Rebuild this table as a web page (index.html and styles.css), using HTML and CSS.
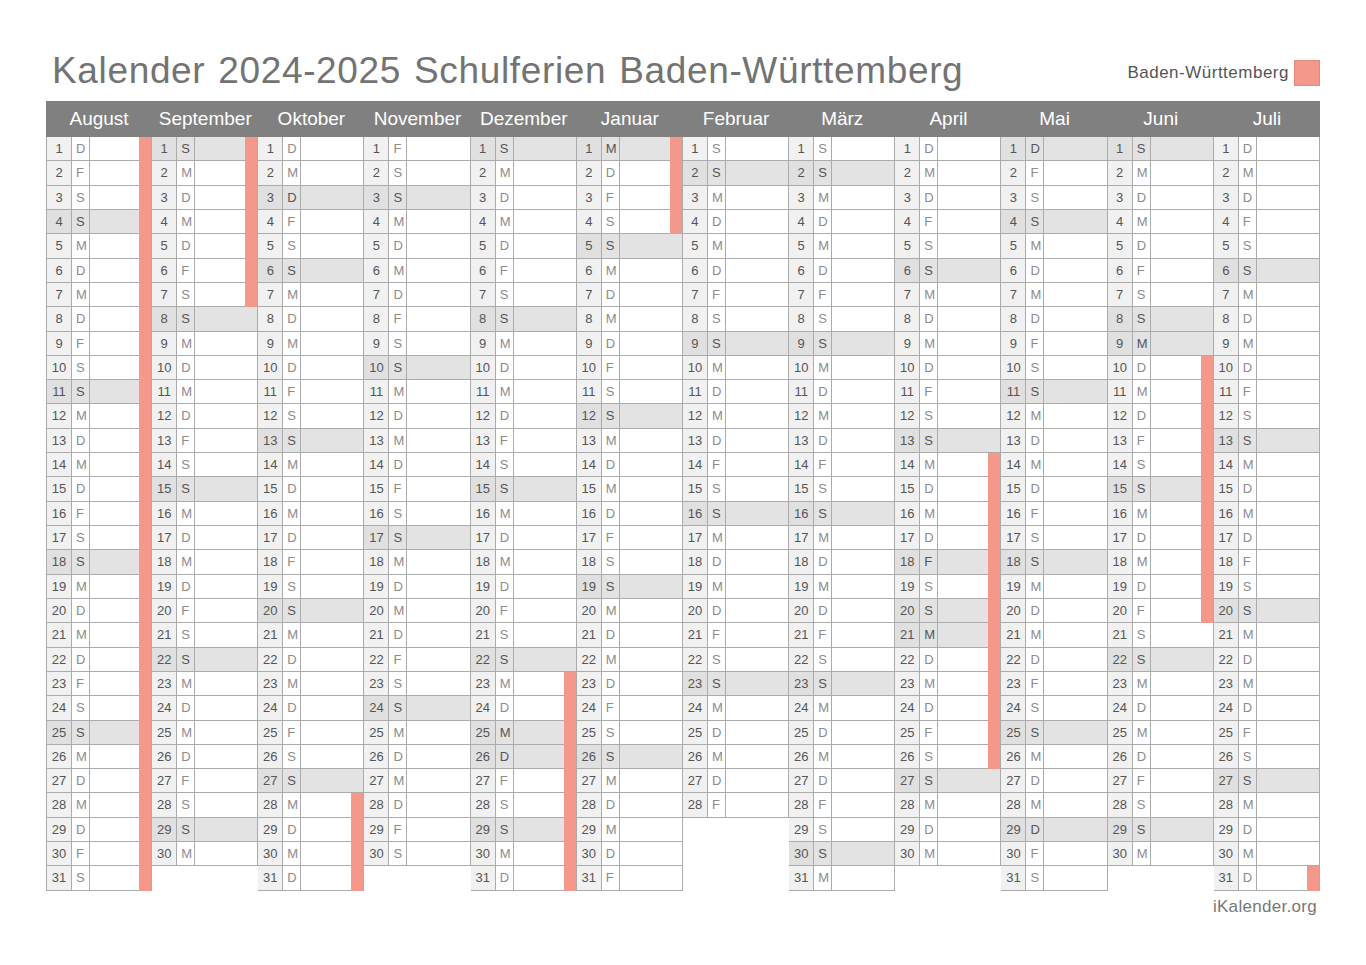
FILE: index.html
```html
<!DOCTYPE html>
<html lang="de">
<head>
<meta charset="utf-8">
<title>Kalender 2024-2025 Schulferien Baden-Württemberg</title>
<link rel="stylesheet" href="styles.css">
</head>
<body>
<div class="page">
  <header class="top">
    <h1>Kalender 2024-2025 Schulferien Baden-Württemberg</h1>
    <div class="legend"><span>Baden-Württemberg</span><span class="sw"></span></div>
  </header>
  <div class="cal-head">
    <div>August</div><div>September</div><div>Oktober</div><div>November</div><div>Dezember</div><div>Januar</div><div>Februar</div><div>März</div><div>April</div><div>Mai</div><div>Juni</div><div>Juli</div>
  </div>
  <div class="cal-body">
    <ul class="m">
      <li class="h"><b>1</b><i>D</i></li><li class="h"><b>2</b><i>F</i></li><li class="h"><b>3</b><i>S</i></li><li class="s h"><b>4</b><i>S</i></li><li class="h"><b>5</b><i>M</i></li><li class="h"><b>6</b><i>D</i></li><li class="h"><b>7</b><i>M</i></li><li class="h"><b>8</b><i>D</i></li><li class="h"><b>9</b><i>F</i></li><li class="h"><b>10</b><i>S</i></li><li class="s h"><b>11</b><i>S</i></li><li class="h"><b>12</b><i>M</i></li><li class="h"><b>13</b><i>D</i></li><li class="h"><b>14</b><i>M</i></li><li class="h"><b>15</b><i>D</i></li><li class="h"><b>16</b><i>F</i></li><li class="h"><b>17</b><i>S</i></li><li class="s h"><b>18</b><i>S</i></li><li class="h"><b>19</b><i>M</i></li><li class="h"><b>20</b><i>D</i></li><li class="h"><b>21</b><i>M</i></li><li class="h"><b>22</b><i>D</i></li><li class="h"><b>23</b><i>F</i></li><li class="h"><b>24</b><i>S</i></li><li class="s h"><b>25</b><i>S</i></li><li class="h"><b>26</b><i>M</i></li><li class="h"><b>27</b><i>D</i></li><li class="h"><b>28</b><i>M</i></li><li class="h"><b>29</b><i>D</i></li><li class="h"><b>30</b><i>F</i></li><li class="h"><b>31</b><i>S</i></li>
    </ul>
    <ul class="m">
      <li class="s h"><b>1</b><i>S</i></li><li class="h"><b>2</b><i>M</i></li><li class="h"><b>3</b><i>D</i></li><li class="h"><b>4</b><i>M</i></li><li class="h"><b>5</b><i>D</i></li><li class="h"><b>6</b><i>F</i></li><li class="h"><b>7</b><i>S</i></li><li class="s"><b>8</b><i>S</i></li><li><b>9</b><i>M</i></li><li><b>10</b><i>D</i></li><li><b>11</b><i>M</i></li><li><b>12</b><i>D</i></li><li><b>13</b><i>F</i></li><li><b>14</b><i>S</i></li><li class="s"><b>15</b><i>S</i></li><li><b>16</b><i>M</i></li><li><b>17</b><i>D</i></li><li><b>18</b><i>M</i></li><li><b>19</b><i>D</i></li><li><b>20</b><i>F</i></li><li><b>21</b><i>S</i></li><li class="s"><b>22</b><i>S</i></li><li><b>23</b><i>M</i></li><li><b>24</b><i>D</i></li><li><b>25</b><i>M</i></li><li><b>26</b><i>D</i></li><li><b>27</b><i>F</i></li><li><b>28</b><i>S</i></li><li class="s"><b>29</b><i>S</i></li><li><b>30</b><i>M</i></li>
    </ul>
    <ul class="m">
      <li><b>1</b><i>D</i></li><li><b>2</b><i>M</i></li><li class="s"><b>3</b><i>D</i></li><li><b>4</b><i>F</i></li><li><b>5</b><i>S</i></li><li class="s"><b>6</b><i>S</i></li><li><b>7</b><i>M</i></li><li><b>8</b><i>D</i></li><li><b>9</b><i>M</i></li><li><b>10</b><i>D</i></li><li><b>11</b><i>F</i></li><li><b>12</b><i>S</i></li><li class="s"><b>13</b><i>S</i></li><li><b>14</b><i>M</i></li><li><b>15</b><i>D</i></li><li><b>16</b><i>M</i></li><li><b>17</b><i>D</i></li><li><b>18</b><i>F</i></li><li><b>19</b><i>S</i></li><li class="s"><b>20</b><i>S</i></li><li><b>21</b><i>M</i></li><li><b>22</b><i>D</i></li><li><b>23</b><i>M</i></li><li><b>24</b><i>D</i></li><li><b>25</b><i>F</i></li><li><b>26</b><i>S</i></li><li class="s"><b>27</b><i>S</i></li><li class="h"><b>28</b><i>M</i></li><li class="h"><b>29</b><i>D</i></li><li class="h"><b>30</b><i>M</i></li><li class="h"><b>31</b><i>D</i></li>
    </ul>
    <ul class="m">
      <li><b>1</b><i>F</i></li><li><b>2</b><i>S</i></li><li class="s"><b>3</b><i>S</i></li><li><b>4</b><i>M</i></li><li><b>5</b><i>D</i></li><li><b>6</b><i>M</i></li><li><b>7</b><i>D</i></li><li><b>8</b><i>F</i></li><li><b>9</b><i>S</i></li><li class="s"><b>10</b><i>S</i></li><li><b>11</b><i>M</i></li><li><b>12</b><i>D</i></li><li><b>13</b><i>M</i></li><li><b>14</b><i>D</i></li><li><b>15</b><i>F</i></li><li><b>16</b><i>S</i></li><li class="s"><b>17</b><i>S</i></li><li><b>18</b><i>M</i></li><li><b>19</b><i>D</i></li><li><b>20</b><i>M</i></li><li><b>21</b><i>D</i></li><li><b>22</b><i>F</i></li><li><b>23</b><i>S</i></li><li class="s"><b>24</b><i>S</i></li><li><b>25</b><i>M</i></li><li><b>26</b><i>D</i></li><li><b>27</b><i>M</i></li><li><b>28</b><i>D</i></li><li><b>29</b><i>F</i></li><li><b>30</b><i>S</i></li>
    </ul>
    <ul class="m">
      <li class="s"><b>1</b><i>S</i></li><li><b>2</b><i>M</i></li><li><b>3</b><i>D</i></li><li><b>4</b><i>M</i></li><li><b>5</b><i>D</i></li><li><b>6</b><i>F</i></li><li><b>7</b><i>S</i></li><li class="s"><b>8</b><i>S</i></li><li><b>9</b><i>M</i></li><li><b>10</b><i>D</i></li><li><b>11</b><i>M</i></li><li><b>12</b><i>D</i></li><li><b>13</b><i>F</i></li><li><b>14</b><i>S</i></li><li class="s"><b>15</b><i>S</i></li><li><b>16</b><i>M</i></li><li><b>17</b><i>D</i></li><li><b>18</b><i>M</i></li><li><b>19</b><i>D</i></li><li><b>20</b><i>F</i></li><li><b>21</b><i>S</i></li><li class="s"><b>22</b><i>S</i></li><li class="h"><b>23</b><i>M</i></li><li class="h"><b>24</b><i>D</i></li><li class="s h"><b>25</b><i>M</i></li><li class="s h"><b>26</b><i>D</i></li><li class="h"><b>27</b><i>F</i></li><li class="h"><b>28</b><i>S</i></li><li class="s h"><b>29</b><i>S</i></li><li class="h"><b>30</b><i>M</i></li><li class="h"><b>31</b><i>D</i></li>
    </ul>
    <ul class="m">
      <li class="s h"><b>1</b><i>M</i></li><li class="h"><b>2</b><i>D</i></li><li class="h"><b>3</b><i>F</i></li><li class="h"><b>4</b><i>S</i></li><li class="s"><b>5</b><i>S</i></li><li><b>6</b><i>M</i></li><li><b>7</b><i>D</i></li><li><b>8</b><i>M</i></li><li><b>9</b><i>D</i></li><li><b>10</b><i>F</i></li><li><b>11</b><i>S</i></li><li class="s"><b>12</b><i>S</i></li><li><b>13</b><i>M</i></li><li><b>14</b><i>D</i></li><li><b>15</b><i>M</i></li><li><b>16</b><i>D</i></li><li><b>17</b><i>F</i></li><li><b>18</b><i>S</i></li><li class="s"><b>19</b><i>S</i></li><li><b>20</b><i>M</i></li><li><b>21</b><i>D</i></li><li><b>22</b><i>M</i></li><li><b>23</b><i>D</i></li><li><b>24</b><i>F</i></li><li><b>25</b><i>S</i></li><li class="s"><b>26</b><i>S</i></li><li><b>27</b><i>M</i></li><li><b>28</b><i>D</i></li><li><b>29</b><i>M</i></li><li><b>30</b><i>D</i></li><li><b>31</b><i>F</i></li>
    </ul>
    <ul class="m">
      <li><b>1</b><i>S</i></li><li class="s"><b>2</b><i>S</i></li><li><b>3</b><i>M</i></li><li><b>4</b><i>D</i></li><li><b>5</b><i>M</i></li><li><b>6</b><i>D</i></li><li><b>7</b><i>F</i></li><li><b>8</b><i>S</i></li><li class="s"><b>9</b><i>S</i></li><li><b>10</b><i>M</i></li><li><b>11</b><i>D</i></li><li><b>12</b><i>M</i></li><li><b>13</b><i>D</i></li><li><b>14</b><i>F</i></li><li><b>15</b><i>S</i></li><li class="s"><b>16</b><i>S</i></li><li><b>17</b><i>M</i></li><li><b>18</b><i>D</i></li><li><b>19</b><i>M</i></li><li><b>20</b><i>D</i></li><li><b>21</b><i>F</i></li><li><b>22</b><i>S</i></li><li class="s"><b>23</b><i>S</i></li><li><b>24</b><i>M</i></li><li><b>25</b><i>D</i></li><li><b>26</b><i>M</i></li><li><b>27</b><i>D</i></li><li><b>28</b><i>F</i></li>
    </ul>
    <ul class="m">
      <li><b>1</b><i>S</i></li><li class="s"><b>2</b><i>S</i></li><li><b>3</b><i>M</i></li><li><b>4</b><i>D</i></li><li><b>5</b><i>M</i></li><li><b>6</b><i>D</i></li><li><b>7</b><i>F</i></li><li><b>8</b><i>S</i></li><li class="s"><b>9</b><i>S</i></li><li><b>10</b><i>M</i></li><li><b>11</b><i>D</i></li><li><b>12</b><i>M</i></li><li><b>13</b><i>D</i></li><li><b>14</b><i>F</i></li><li><b>15</b><i>S</i></li><li class="s"><b>16</b><i>S</i></li><li><b>17</b><i>M</i></li><li><b>18</b><i>D</i></li><li><b>19</b><i>M</i></li><li><b>20</b><i>D</i></li><li><b>21</b><i>F</i></li><li><b>22</b><i>S</i></li><li class="s"><b>23</b><i>S</i></li><li><b>24</b><i>M</i></li><li><b>25</b><i>D</i></li><li><b>26</b><i>M</i></li><li><b>27</b><i>D</i></li><li><b>28</b><i>F</i></li><li><b>29</b><i>S</i></li><li class="s"><b>30</b><i>S</i></li><li><b>31</b><i>M</i></li>
    </ul>
    <ul class="m">
      <li><b>1</b><i>D</i></li><li><b>2</b><i>M</i></li><li><b>3</b><i>D</i></li><li><b>4</b><i>F</i></li><li><b>5</b><i>S</i></li><li class="s"><b>6</b><i>S</i></li><li><b>7</b><i>M</i></li><li><b>8</b><i>D</i></li><li><b>9</b><i>M</i></li><li><b>10</b><i>D</i></li><li><b>11</b><i>F</i></li><li><b>12</b><i>S</i></li><li class="s"><b>13</b><i>S</i></li><li class="h"><b>14</b><i>M</i></li><li class="h"><b>15</b><i>D</i></li><li class="h"><b>16</b><i>M</i></li><li class="h"><b>17</b><i>D</i></li><li class="s h"><b>18</b><i>F</i></li><li class="h"><b>19</b><i>S</i></li><li class="s h"><b>20</b><i>S</i></li><li class="s h"><b>21</b><i>M</i></li><li class="h"><b>22</b><i>D</i></li><li class="h"><b>23</b><i>M</i></li><li class="h"><b>24</b><i>D</i></li><li class="h"><b>25</b><i>F</i></li><li class="h"><b>26</b><i>S</i></li><li class="s"><b>27</b><i>S</i></li><li><b>28</b><i>M</i></li><li><b>29</b><i>D</i></li><li><b>30</b><i>M</i></li>
    </ul>
    <ul class="m">
      <li class="s"><b>1</b><i>D</i></li><li><b>2</b><i>F</i></li><li><b>3</b><i>S</i></li><li class="s"><b>4</b><i>S</i></li><li><b>5</b><i>M</i></li><li><b>6</b><i>D</i></li><li><b>7</b><i>M</i></li><li><b>8</b><i>D</i></li><li><b>9</b><i>F</i></li><li><b>10</b><i>S</i></li><li class="s"><b>11</b><i>S</i></li><li><b>12</b><i>M</i></li><li><b>13</b><i>D</i></li><li><b>14</b><i>M</i></li><li><b>15</b><i>D</i></li><li><b>16</b><i>F</i></li><li><b>17</b><i>S</i></li><li class="s"><b>18</b><i>S</i></li><li><b>19</b><i>M</i></li><li><b>20</b><i>D</i></li><li><b>21</b><i>M</i></li><li><b>22</b><i>D</i></li><li><b>23</b><i>F</i></li><li><b>24</b><i>S</i></li><li class="s"><b>25</b><i>S</i></li><li><b>26</b><i>M</i></li><li><b>27</b><i>D</i></li><li><b>28</b><i>M</i></li><li class="s"><b>29</b><i>D</i></li><li><b>30</b><i>F</i></li><li><b>31</b><i>S</i></li>
    </ul>
    <ul class="m">
      <li class="s"><b>1</b><i>S</i></li><li><b>2</b><i>M</i></li><li><b>3</b><i>D</i></li><li><b>4</b><i>M</i></li><li><b>5</b><i>D</i></li><li><b>6</b><i>F</i></li><li><b>7</b><i>S</i></li><li class="s"><b>8</b><i>S</i></li><li class="s"><b>9</b><i>M</i></li><li class="h"><b>10</b><i>D</i></li><li class="h"><b>11</b><i>M</i></li><li class="h"><b>12</b><i>D</i></li><li class="h"><b>13</b><i>F</i></li><li class="h"><b>14</b><i>S</i></li><li class="s h"><b>15</b><i>S</i></li><li class="h"><b>16</b><i>M</i></li><li class="h"><b>17</b><i>D</i></li><li class="h"><b>18</b><i>M</i></li><li class="h"><b>19</b><i>D</i></li><li class="h"><b>20</b><i>F</i></li><li><b>21</b><i>S</i></li><li class="s"><b>22</b><i>S</i></li><li><b>23</b><i>M</i></li><li><b>24</b><i>D</i></li><li><b>25</b><i>M</i></li><li><b>26</b><i>D</i></li><li><b>27</b><i>F</i></li><li><b>28</b><i>S</i></li><li class="s"><b>29</b><i>S</i></li><li><b>30</b><i>M</i></li>
    </ul>
    <ul class="m">
      <li><b>1</b><i>D</i></li><li><b>2</b><i>M</i></li><li><b>3</b><i>D</i></li><li><b>4</b><i>F</i></li><li><b>5</b><i>S</i></li><li class="s"><b>6</b><i>S</i></li><li><b>7</b><i>M</i></li><li><b>8</b><i>D</i></li><li><b>9</b><i>M</i></li><li><b>10</b><i>D</i></li><li><b>11</b><i>F</i></li><li><b>12</b><i>S</i></li><li class="s"><b>13</b><i>S</i></li><li><b>14</b><i>M</i></li><li><b>15</b><i>D</i></li><li><b>16</b><i>M</i></li><li><b>17</b><i>D</i></li><li><b>18</b><i>F</i></li><li><b>19</b><i>S</i></li><li class="s"><b>20</b><i>S</i></li><li><b>21</b><i>M</i></li><li><b>22</b><i>D</i></li><li><b>23</b><i>M</i></li><li><b>24</b><i>D</i></li><li><b>25</b><i>F</i></li><li><b>26</b><i>S</i></li><li class="s"><b>27</b><i>S</i></li><li><b>28</b><i>M</i></li><li><b>29</b><i>D</i></li><li><b>30</b><i>M</i></li><li class="h"><b>31</b><i>D</i></li>
    </ul>
  </div>
  <footer class="foot">iKalender.org</footer>
</div>
</body>
</html>
```
FILE: styles.css
```css
html, body {
  margin: 0;
  padding: 0;
  background: #ffffff;
}
body {
  font-family: "Liberation Sans", Arial, Helvetica, sans-serif;
  color: #555555;
}
.page {
  width: 1274px;
  margin-left: 46px;
}
.top {
  display: flex;
  justify-content: space-between;
  align-items: flex-start;
  height: 101px;
}
.top h1 {
  margin: 49px 0 0 6px;
  font-size: 37px;
  line-height: 44px;
  font-weight: normal;
  color: #737373;
  letter-spacing: 0.65px;
  word-spacing: 2px;
  white-space: nowrap;
}
.legend {
  margin-top: 60px;
  display: flex;
  align-items: center;
  gap: 5px;
  font-size: 17px;
  letter-spacing: 0.5px;
  color: #555555;
}
.legend .sw {
  width: 26px;
  height: 26px;
  background: #f4988b;
  border: 1px solid #e08a7f;
  box-sizing: border-box;
}
.cal-head {
  display: grid;
  grid-template-columns: repeat(12, 1fr);
  height: 36px;
  background: #808080;
  color: #ffffff;
  font-size: 19px;
  line-height: 36px;
  text-align: center;
}
.cal-body {
  display: grid;
  grid-template-columns: repeat(12, 1fr);
  align-items: start;
}
.m {
  list-style: none;
  margin: 0;
  padding: 0;
  border-right: 1px solid #ababab;
}
.m:first-child {
  border-left: 1px solid #ababab;
}
.m li {
  position: relative;
  display: grid;
  grid-template-columns: 25px 18px 1fr;
  height: 24.32px;
  box-sizing: border-box;
  border-bottom: 1px solid #ababab;
  background: #ffffff;
  font-size: 13px;
  line-height: 23.32px;
}
.m li b {
  font-weight: normal;
  text-align: center;
  background: #f1f1f1;
  border-right: 1px solid #ababab;
  color: #555555;
}
.m li i {
  font-style: normal;
  padding-left: 4px;
  border-right: 1px solid #ababab;
  color: #8c8c8c;
}
.m li.s {
  background: #e3e3e3;
}
.m li.s b {
  background: #e0e0e0;
}
.m li.s i {
  color: #555555;
}
.m li.h::after {
  content: "";
  position: absolute;
  right: 0;
  top: 0;
  bottom: -1px;
  width: 12px;
  background: #f4988b;
}
.foot {
  margin-top: 6px;
  margin-right: 3px;
  text-align: right;
  font-size: 17px;
  letter-spacing: 0.3px;
  line-height: 20px;
  color: #777777;
}
```
